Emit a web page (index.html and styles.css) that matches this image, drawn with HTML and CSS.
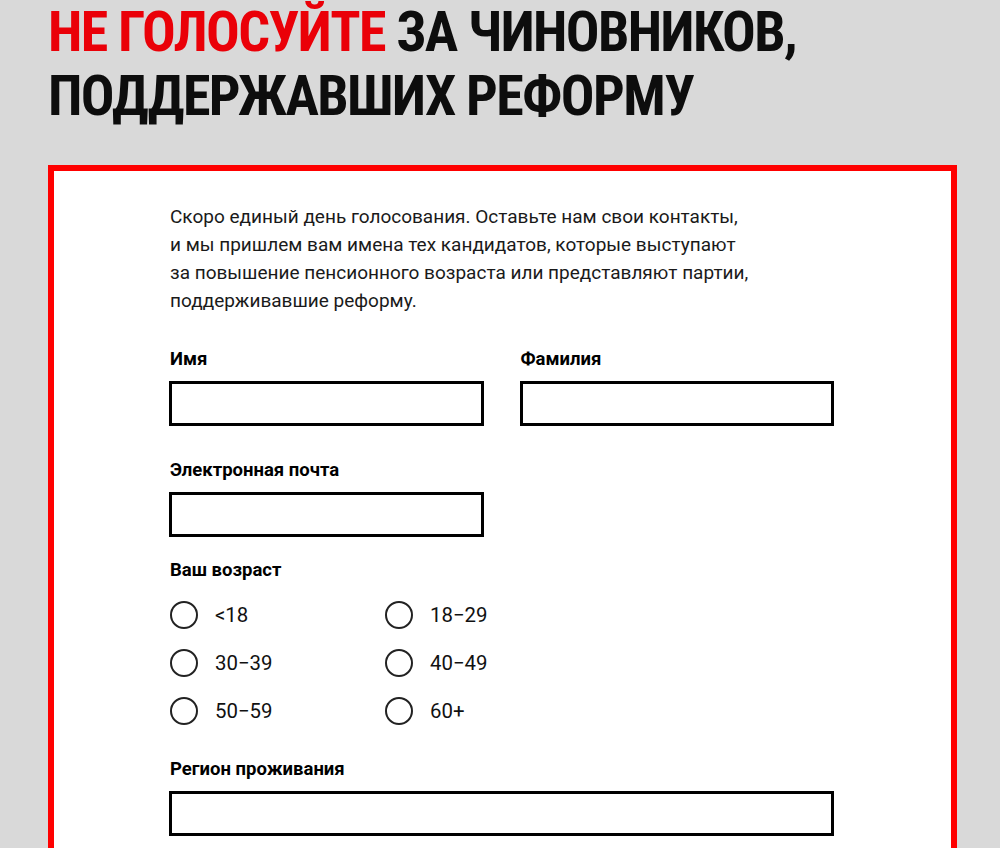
FILE: index.html
```html
<!DOCTYPE html>
<html lang="ru">
<head>
<meta charset="utf-8">
<link rel="stylesheet" href="styles.css">
</head>
<body>
<div class="page">
  <h1 class="title"><span class="accent">НЕ ГОЛОСУЙТЕ</span> ЗА ЧИНОВНИКОВ,<br>ПОДДЕРЖАВШИХ РЕФОРМУ</h1>
  <div class="frame">
    <form class="form">
      <p class="intro">Скоро единый день голосования. Оставьте нам свои контакты, и&nbsp;мы пришлем вам имена тех кандидатов, которые выступают за&nbsp;повышение пенсионного возраста или представляют партии, поддерживавшие реформу.</p>
      <div class="row">
        <label class="field">
          <span class="label">Имя</span>
          <span class="input"></span>
        </label>
        <label class="field">
          <span class="label">Фамилия</span>
          <span class="input"></span>
        </label>
      </div>
      <div class="row">
        <label class="field">
          <span class="label">Электронная почта</span>
          <span class="input"></span>
        </label>
      </div>
      <div class="group">
        <span class="label">Ваш возраст</span>
        <div class="radios">
          <div class="radio"><span class="circle"></span><span>&lt;18</span></div>
          <div class="radio"><span class="circle"></span><span>18−29</span></div>
          <div class="radio"><span class="circle"></span><span>30−39</span></div>
          <div class="radio"><span class="circle"></span><span>40−49</span></div>
          <div class="radio"><span class="circle"></span><span>50−59</span></div>
          <div class="radio"><span class="circle"></span><span>60+</span></div>
        </div>
      </div>
      <label class="field wide">
        <span class="label">Регион проживания</span>
        <span class="input"></span>
      </label>
    </form>
  </div>
</div>
</body>
</html>
```

FILE: styles.css
```css
html, body {
  margin: 0;
  padding: 0;
  background: #d9d9d9;
}
body {
  font-family: Roboto, "Noto Sans", sans-serif;
  color: #111;
}
.page {
  padding: 0 43px 0 48px;
}
.title {
  margin: 0;
  font-family: "Roboto Condensed", "Liberation Sans Narrow", "DejaVu Sans Condensed", Roboto, sans-serif;
  font-weight: 700;
  font-size: 56px;
  line-height: 64px;
  color: #0d0d0d;
  letter-spacing: -1.6px;
}
.accent {
  color: #ea0008;
}
.frame {
  margin-top: 37px;
  border: 6px solid #ff0000;
  background: #fff;
  min-height: 900px;
  padding: 32px 0 0 115px;
}
.form {
  width: 665px;
  display: flex;
  flex-direction: column;
}
.intro {
  margin: 0 0 33px 1px;
  max-width: 590px;
  font-size: 19px;
  line-height: 28px;
  color: #1a1a1a;
}
.row {
  display: flex;
  gap: 36px;
  margin-bottom: 33px;
}
.field {
  display: flex;
  flex-direction: column;
  width: 315px;
}
.field.wide {
  width: 665px;
}
.label {
  font-weight: 700;
  font-size: 18.5px;
  line-height: 22px;
  color: #000;
  margin: 0 0 11px 1px;
}
.input {
  display: block;
  height: 39px;
  border: 3px solid #000;
  background: #fff;
}
.group {
  display: flex;
  flex-direction: column;
  margin-top: -11px;
}
.group .label {
  margin-bottom: 20px;
}
.radios {
  display: grid;
  grid-template-columns: 215px 215px;
  row-gap: 20px;
  margin-bottom: 33px;
  padding-left: 1px;
}
.radio {
  display: flex;
  align-items: center;
  gap: 17px;
  font-size: 20.4px;
  line-height: 28px;
  color: #111;
}
.circle {
  width: 24px;
  height: 24px;
  border: 2px solid #222;
  border-radius: 50%;
}
```
